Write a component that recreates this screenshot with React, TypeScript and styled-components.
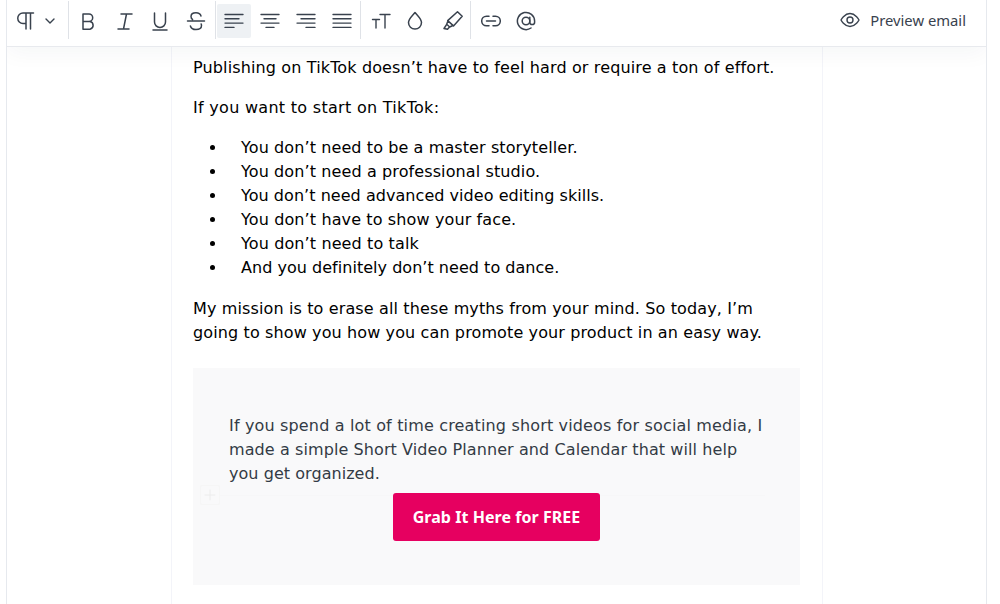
import React from "react";
import styled, { createGlobalStyle } from "styled-components";

const Global = createGlobalStyle`
  html, body { margin: 0; padding: 0; background: #fff; height: 100%; overflow: hidden; }
  * { box-sizing: border-box; }
`;

const Frame = styled.div`
  width: 981px;
  height: 604px;
  margin-left: 6px;
  border-left: 1px solid #e6e9ee;
  border-right: 1px solid #e6e9ee;
  display: flex;
  flex-direction: column;
  overflow: hidden;
  position: relative;
`;

const Toolbar = styled.div`
  height: 47px;
  flex: none;
  display: flex;
  align-items: flex-start;
  background: #fff;
  border-bottom: 1px solid #e8eaee;
  box-shadow: 0 6px 22px rgba(30, 40, 60, 0.045);
  position: relative;
  z-index: 2;
`;

const ToolGroup = styled.div<{ $pad?: string }>`
  display: flex;
  align-items: flex-start;
  height: 39px;
  padding: ${(p) => p.$pad || "0"};
`;

const Sep = styled.div`
  width: 1px;
  height: 38px;
  margin-top: 1px;
  background: #dfe2e7;
  flex: none;
`;

const ToolBtn = styled.div<{ $w: number; $ml?: number; $active?: boolean }>`
  width: ${(p) => p.$w}px;
  height: 34px;
  margin-top: 4px;
  margin-left: ${(p) => p.$ml || 0}px;
  flex: none;
  display: flex;
  align-items: center;
  justify-content: center;
  border-radius: 2px;
  background: ${(p) => (p.$active ? "#eef1f4" : "transparent")};
  color: #39424e;
`;

const Spacer = styled.div`
  flex: 1;
`;

const PreviewBtn = styled.div`
  height: 32px;
  margin-top: 4px;
  margin-right: 20px;
  display: flex;
  align-items: center;
  gap: 10px;
  font: 400 14.8px/20px "Noto Sans", sans-serif;
  color: #39424e;
`;

const Canvas = styled.div`
  flex: 1;
  display: flex;
  padding-left: 164px;
  position: relative;
`;

const Column = styled.div`
  width: 652px;
  height: 100%;
  border-left: 1px solid #f3f4f9;
  border-right: 1px solid #f3f4f9;
  padding: 9px 21px 0 21px;
  font: 400 16px/24px "DejaVu Sans", Verdana, sans-serif;
  color: #000;
`;

const Para = styled.p<{ $end?: boolean }>`
  margin: 0 0 ${(p) => (p.$end ? 0 : 16)}px;
  width: 600px;
`;

const Line = styled.span<{ $t: number }>`
  display: block;
  white-space: nowrap;
  letter-spacing: ${(p) => p.$t}px;
`;

const List = styled.ul`
  margin: 0 0 17px;
  padding: 0 0 0 34px;
  list-style: disc;
`;

const Item = styled.li<{ $t: number }>`
  padding-left: 14px;
  letter-spacing: ${(p) => p.$t}px;
`;

const Callout = styled.div`
  margin-top: 23px;
  width: 607px;
  height: 217px;
  background: #f9f9fa;
  padding: 46px 36px 0;
  display: flex;
  flex-direction: column;
  align-items: center;
  position: relative;
`;

const CalloutText = styled.p`
  margin: 0;
  align-self: stretch;
  color: #333b45;
`;

const Cta = styled.div`
  margin-top: 7px;
  width: 207px;
  height: 48px;
  border-radius: 3px;
  background: #e60060;
  color: #fff;
  display: flex;
  align-items: center;
  justify-content: center;
  font: 700 16px/24px "Noto Sans", sans-serif;
  letter-spacing: 0.05px;
  position: relative;
  z-index: 1;
`;

const AddHandle = styled.div`
  position: absolute;
  left: 7px;
  top: 117px;
  width: 20px;
  height: 20px;
  border: 1px solid #f6f6f6;
  border-radius: 2px;
  display: flex;
  align-items: center;
  justify-content: center;
  color: #ececec;
`;

const AddLine = styled.div`
  position: absolute;
  left: 27px;
  top: 127px;
  width: 545px;
  height: 1px;
  background: #f7f7f8;
`;

const Svg: React.FC<{ w?: number; h?: number; sw?: number; children: React.ReactNode }> = ({ w = 24, h = 24, sw = 1.5, children }) => (
  <svg width={w} height={h} viewBox={`0 0 ${w} ${h}`} fill="none" stroke="currentColor" strokeWidth={sw} strokeLinecap="round" strokeLinejoin="round">
    {children}
  </svg>
);

const AlignIcon = ({ rows }: { rows: [number, number][] }) => (
  <Svg w={20} h={20} sw={1.4}>
    {rows.map(([a, b], i) => (
      <path key={i} d={`M${a} ${3.5 + i * 4.3}H${b}`} />
    ))}
  </Svg>
);

export default function App() {
  return (
    <Frame>
      <Global />
      <Toolbar>
        <ToolGroup $pad="0 10px 0 3px">
          <ToolBtn $w={32}>
            <Svg w={22} h={22} sw={1.5}>
              <path d="M18.500 3H8a5 5 0 0 0 0 10.500h3M11 3v16M15.500 3v16" />
            </Svg>
          </ToolBtn>
          <ToolBtn $w={16}>
            <Svg w={14} h={14} sw={1.4}>
              <path d="M3 5l4 4 4-4" />
            </Svg>
          </ToolBtn>
        </ToolGroup>
        <Sep />
        <ToolGroup $pad="0 1px 0 0">
          <ToolBtn $w={38}>
            <Svg w={16} h={20} sw={1.5}>
              <path d="M3 3h6a3.600 3.600 0 0 1 0 7.400H3zM3 10.400h7a4 4 0 0 1 0 7.800H3z" />
            </Svg>
          </ToolBtn>
          <ToolBtn $w={35}>
            <Svg w={20} h={20} sw={1.5}>
              <path d="M6 3h11M3 18h11M11.500 3L8.500 18" />
            </Svg>
          </ToolBtn>
          <ToolBtn $w={36}>
            <Svg w={18} h={22} sw={1.5}>
              <path d="M3.500 3v9a5.500 5.500 0 0 0 11 0V3M2 20h14" />
            </Svg>
          </ToolBtn>
          <ToolBtn $w={36}>
            <Svg w={20} h={22} sw={1.5}>
              <path d="M15 6c-.6-2-2.600-3.200-5-3.200-2.800 0-5 1.400-5 3.700 0 1.200.6 2.300 1.600 3M1.500 11h17M15.200 14c.2.6.3 1 .3 1.600 0 2.600-2.500 4-5.500 4s-5-1.300-5.600-3.600" />
            </Svg>
          </ToolBtn>
        </ToolGroup>
        <Sep />
        <ToolGroup $pad="0 0 0 1px">
          <ToolBtn $w={34} $active>
            <AlignIcon rows={[[1, 19], [1, 15], [1, 19], [1, 10]]} />
          </ToolBtn>
          <ToolBtn $w={36} $ml={1}>
            <AlignIcon rows={[[1, 19], [4, 16], [1, 19], [6, 14]]} />
          </ToolBtn>
          <ToolBtn $w={36}>
            <AlignIcon rows={[[1, 19], [5, 19], [1, 19], [10, 19]]} />
          </ToolBtn>
          <ToolBtn $w={36}>
            <AlignIcon rows={[[1, 19], [1, 19], [1, 19], [1, 19]]} />
          </ToolBtn>
        </ToolGroup>
        <Sep />
        <ToolGroup $pad="0 0 0 1px">
          <ToolBtn $w={38}>
            <Svg w={20} h={20} sw={1.4}>
              <path d="M1.500 8.500h7M5 8.500V17M9 3.500h10M14 3.500V17" />
            </Svg>
          </ToolBtn>
          <ToolBtn $w={30}>
            <Svg w={18} h={20} sw={1.5}>
              <path d="M9 1.500c2.700 3.400 6.500 6.300 6.500 10.100a6.500 6.500 0 0 1-13 0C2.500 7.800 6.300 4.900 9 1.500z" />
            </Svg>
          </ToolBtn>
          <ToolBtn $w={34} $ml={6}>
            <Svg w={22} h={22} sw={1.5}>
              <path d="M15.500 1.800l4.700 4.400-8.700 9.700-5.800-5.300zM6 10.800l-1.300 3.500 3 2.700 3.300-1.500M4.700 14.300L2 18.500l3.500.8 2-2.200" />
            </Svg>
          </ToolBtn>
        </ToolGroup>
        <Sep />
        <ToolGroup>
          <ToolBtn $w={39}>
            <Svg w={20} h={14} sw={1.5}>
              <path d="M8 2.200H5.500a4.800 4.800 0 0 0 0 9.600H8M12 2.200h2.500a4.800 4.800 0 0 1 0 9.600H12M5.500 7h9" />
            </Svg>
          </ToolBtn>
          <ToolBtn $w={32}>
            <Svg w={20} h={20} sw={1.5}>
              <circle cx="10" cy="10" r="3.800" />
              <path d="M13.800 6.200v5a2.400 2.400 0 0 0 4.800 0V10a8.600 8.600 0 1 0-3.600 7" />
            </Svg>
          </ToolBtn>
        </ToolGroup>
        <Spacer />
        <PreviewBtn>
          <Svg w={20} h={20} sw={1.4}>
            <path d="M1 10s3.400-6.500 9-6.500S19 10 19 10s-3.400 6.500-9 6.500S1 10 1 10z" />
            <circle cx="10" cy="10" r="3" />
          </Svg>
          Preview email
        </PreviewBtn>
      </Toolbar>
      <Canvas>
        <Column>
          <Para>
            <Line $t={0.135}>Publishing on TikTok doesn’t have to feel hard or require a ton of effort.</Line>
          </Para>
          <Para>
            <Line $t={0.29}>If you want to start on TikTok:</Line>
          </Para>
          <List>
            <Item $t={0.1}>You don’t need to be a master storyteller.</Item>
            <Item $t={0.11}>You don’t need a professional studio.</Item>
            <Item $t={0.045}>You don’t need advanced video editing skills.</Item>
            <Item $t={0.12}>You don’t have to show your face.</Item>
            <Item $t={0.12}>You don’t need to talk</Item>
            <Item $t={0.03}>And you definitely don’t need to dance.</Item>
          </List>
          <Para $end>
            <Line $t={0.13}>My mission is to erase all these myths from your mind. So today, I’m</Line>
            <Line $t={0.12}>going to show you how you can promote your product in an easy way.</Line>
          </Para>
          <Callout>
            <CalloutText>
              <Line $t={0.16}>If you spend a lot of time creating short videos for social media, I</Line>
              <Line $t={0.09}>made a simple Short Video Planner and Calendar that will help</Line>
              <Line $t={0.05}>you get organized.</Line>
            </CalloutText>
            <Cta>Grab It Here for FREE</Cta>
            <AddHandle>
              <Svg w={12} h={12} sw={1}>
                <path d="M6 1v10M1 6h10" />
              </Svg>
            </AddHandle>
            <AddLine />
          </Callout>
        </Column>
      </Canvas>
    </Frame>
  );
}
